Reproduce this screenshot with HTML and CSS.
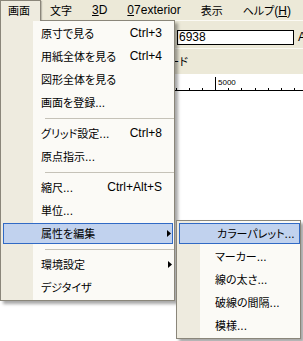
FILE: index.html
```html
<!DOCTYPE html>
<html lang="ja">
<head>
<meta charset="utf-8">
<link rel="stylesheet" href="styles.css">
</head>
<body>
<div class="app">
  <div class="menubar">
    <div class="mb-item pressed">画面</div>
    <div class="mb-item">文字</div>
    <div class="mb-item lat"><u>3</u>D</div>
    <div class="mb-item lat"><u>0</u>7exterior</div>
    <div class="mb-item">表示</div>
    <div class="mb-item">ヘルプ<span class="lat">(<u>H</u>)</span></div>
  </div>
  <div class="toolbar1">
    <div class="input lat">6938</div>
    <span class="lat tlabel">A</span>
  </div>
  <div class="toolbar2"><span class="mode">モード</span></div>
  <svg class="ruler" width="303" height="17" viewBox="0 0 303 17">
    <line x1="0" y1="16.5" x2="303" y2="16.5" stroke="#000" stroke-width="1"/>
    <line x1="215.5" y1="3" x2="215.5" y2="16" stroke="#000" stroke-width="1"/>
    <g stroke="#000" stroke-width="1">
      <line x1="176.5" y1="14" x2="176.5" y2="16"/>
      <line x1="189.5" y1="14" x2="189.5" y2="16"/>
      <line x1="202.5" y1="14" x2="202.5" y2="16"/>
      <line x1="228.5" y1="14" x2="228.5" y2="16"/>
      <line x1="241.5" y1="14" x2="241.5" y2="16"/>
      <line x1="255.5" y1="14" x2="255.5" y2="16"/>
      <line x1="268.5" y1="14" x2="268.5" y2="16"/>
      <line x1="281.5" y1="14" x2="281.5" y2="16"/>
      <line x1="294.5" y1="14" x2="294.5" y2="16"/>
    </g>
    <text x="218" y="11" class="rtext">5000</text>
  </svg>

  <div class="menu main-menu">
    <div class="mi"><span class="t">原寸で見る</span><span class="k">Ctrl+3</span><span class="ar"></span></div>
    <div class="mi"><span class="t">用紙全体を見る</span><span class="k">Ctrl+4</span><span class="ar"></span></div>
    <div class="mi"><span class="t">図形全体を見る</span><span class="ar"></span></div>
    <div class="mi"><span class="t">画面を登録<span class="d">...</span></span><span class="ar"></span></div>
    <div class="sep"></div>
    <div class="mi"><span class="t">グリッド設定<span class="d">...</span></span><span class="k">Ctrl+8</span><span class="ar"></span></div>
    <div class="mi"><span class="t">原点指示<span class="d">...</span></span><span class="ar"></span></div>
    <div class="sep"></div>
    <div class="mi"><span class="t">縮尺<span class="d">...</span></span><span class="k">Ctrl+Alt+S</span><span class="ar"></span></div>
    <div class="mi"><span class="t">単位<span class="d">...</span></span><span class="ar"></span></div>
    <div class="mi hl"><span class="t">属性を編集</span><span class="ar"><svg width="4" height="7" viewBox="0 0 4 7"><polygon points="0,0 4,3.5 0,7" fill="#000"/></svg></span></div>
    <div class="sep"></div>
    <div class="mi"><span class="t">環境設定</span><span class="ar"><svg width="4" height="7" viewBox="0 0 4 7"><polygon points="0,0 4,3.5 0,7" fill="#000"/></svg></span></div>
    <div class="mi"><span class="t">デジタイザ</span><span class="ar"></span></div>
  </div>

  <div class="menu sub-menu">
    <div class="mi hl"><span class="t">カラーパレット<span class="d">...</span></span></div>
    <div class="mi"><span class="t">マーカー<span class="d">...</span></span></div>
    <div class="mi"><span class="t">線の太さ<span class="d">...</span></span></div>
    <div class="mi"><span class="t">破線の間隔<span class="d">...</span></span></div>
    <div class="mi"><span class="t">模様<span class="d">...</span></span></div>
  </div>
</div>
</body>
</html>
```

FILE: styles.css
```css
* { box-sizing: border-box; }
html, body { margin: 0; padding: 0; }
body {
  background: #fff;
  width: 303px;
  height: 341px;
  overflow: hidden;
  font-family: "Noto Sans CJK JP", sans-serif;
  font-size: 11px;
  font-feature-settings: "palt" 1;
  color: #000;
}
.app { position: relative; width: 303px; height: 341px; }
.lat { font-family: "Liberation Sans", Arial, sans-serif; font-size: 12px; }
u { text-decoration: underline; text-underline-offset: 1px; }

.menubar {
  height: 20px;
  background: #ece9d8;
  display: flex;
  align-items: stretch;
}
.mb-item {
  line-height: 20px;
  padding: 0 10px;
  white-space: nowrap;
}
.mb-item.pressed {
  position: relative;
  z-index: 3;
  height: 21px;
  width: 41px;
  padding: 0 0 0 7px;
  background: #eeebdf;
  border: 1px solid #8a867a;
  border-bottom: none;
  line-height: 19px;
  box-shadow: 2px 0 1px -1px rgba(0,0,0,0.2);
}
.mb-item.pressed + .mb-item { padding-left: 9px; }

.toolbar1 {
  height: 28px;
  background: #ece9d8;
  border-top: 1px solid #fbfaf4;
  padding: 9px 0 0 177px;
  display: flex;
  align-items: flex-start;
  white-space: nowrap;
}
.input {
  width: 117px;
  height: 15px;
  border: 1px solid #000;
  background: #fff;
  line-height: 13px;
  padding-left: 1px;
  flex: none;
}
.tlabel { margin-left: 4px; line-height: 15px; }

.toolbar2 {
  height: 26px;
  background: #ece9d8;
  border-top: 1px solid #fbfaf4;
  padding-left: 158px;
  line-height: 25px;
  white-space: nowrap;
}

.ruler { display: block; background: #fff; }
.rtext { font-family: "Liberation Sans", Arial, sans-serif; font-size: 8px; fill: #000; }

.menu {
  position: absolute;
  border: 1px solid #8a867a;
  padding: 1px 1px 1px 2px;
  box-shadow: 3px 3px 3px rgba(0,0,0,0.35);
  z-index: 2;
}
.main-menu {
  left: 0;
  top: 20px;
  width: 175px;
  height: 281px;
  background: linear-gradient(to right, #eeebdf 32px, #fbfaf6 32px);
}
.sub-menu {
  left: 176px;
  top: 220px;
  width: 125px;
  height: 119px;
  padding-right: 0;
  background: linear-gradient(to right, #eeebdf 23px, #fbfaf6 23px);
}
.mi {
  height: 23px;
  line-height: 23px;
  display: flex;
  align-items: center;
  padding-left: 38px;
  white-space: nowrap;
}
.sub-menu .mi { padding-left: 36px; }
.mi .t { line-height: 23px; }
.d { font-family: "Liberation Sans", Arial, sans-serif; font-size: 12px; }
.k {
  margin-left: auto;
  font-family: "Liberation Sans", Arial, sans-serif;
  font-size: 12px;
}
.ar {
  width: 11px;
  flex: none;
  margin-left: auto;
  display: flex;
  align-items: center;
  justify-content: flex-end;
  padding-right: 1px;
  height: 23px;
}
.k + .ar { margin-left: 0; }
.ar svg { display: block; }
.mi.hl {
  height: 21px;
  margin: 1px 0;
  background: #c1d2ee;
  border: 1px solid #316ac5;
  padding-left: 37px;
}
.mi.hl .t, .mi.hl .ar { line-height: 19px; height: 19px; }
.sep {
  height: 8px;
  margin-left: 42px;
  position: relative;
}
.sep::after {
  content: "";
  position: absolute;
  left: 0;
  right: -1px;
  top: 4px;
  height: 1px;
  background: #c5c2b8;
}
```
